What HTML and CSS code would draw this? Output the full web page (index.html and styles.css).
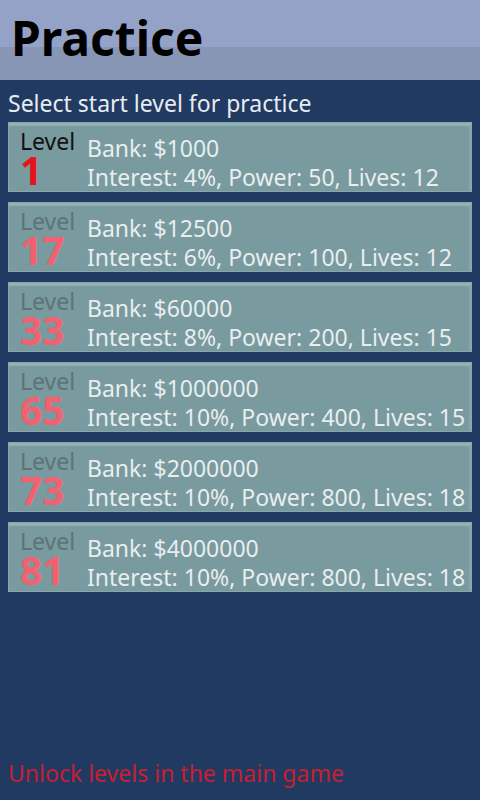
FILE: index.html
```html
<!DOCTYPE html>
<html lang="en">
<head>
    <meta charset="UTF-8">
    <meta name="viewport" content="width=device-width, initial-scale=1.0">
    <title>Practice</title>
    <link rel="stylesheet" href="styles.css">
</head>
<body>

<div class="header">
    <h1>Practice</h1>
</div>

<div class="content">
    <p class="intro">Select start level for practice</p>

    <!-- Level list -->
    <div class="levels">
        <div class="level unlocked">
            <div class="level-num"><span class="label">Level</span><span class="num">1</span></div>
            <div class="level-info"><div>Bank: $1000</div><div>Interest: 4%, Power: 50, Lives: 12</div></div>
        </div>
        <div class="level">
            <div class="level-num"><span class="label">Level</span><span class="num">17</span></div>
            <div class="level-info"><div>Bank: $12500</div><div>Interest: 6%, Power: 100, Lives: 12</div></div>
        </div>
        <div class="level">
            <div class="level-num"><span class="label">Level</span><span class="num">33</span></div>
            <div class="level-info"><div>Bank: $60000</div><div>Interest: 8%, Power: 200, Lives: 15</div></div>
        </div>
        <div class="level">
            <div class="level-num"><span class="label">Level</span><span class="num">65</span></div>
            <div class="level-info"><div>Bank: $1000000</div><div>Interest: 10%, Power: 400, Lives: 15</div></div>
        </div>
        <div class="level">
            <div class="level-num"><span class="label">Level</span><span class="num">73</span></div>
            <div class="level-info"><div>Bank: $2000000</div><div>Interest: 10%, Power: 800, Lives: 18</div></div>
        </div>
        <div class="level">
            <div class="level-num"><span class="label">Level</span><span class="num">81</span></div>
            <div class="level-info"><div>Bank: $4000000</div><div>Interest: 10%, Power: 800, Lives: 18</div></div>
        </div>
    </div>

    <p class="unlock">Unlock levels in the main game</p>
</div>

</body>
</html>
```

FILE: styles.css
```css
html, body {
    height: 100%;
}
body {
    font-family: "Noto Sans", "Open Sans", sans-serif;
    margin: 0;
    background-color: #203a62;
    display: flex;
    flex-direction: column;
}
.header {
    height: 80px;
    background: linear-gradient(to bottom, #93a2c6 0, #93a2c6 47px, #8696b4 47px, #8696b4 100%);
}
.header h1 {
    margin: 0;
    padding-left: 11px;
    font-size: 48px;
    line-height: 75px;
    font-weight: bold;
    color: #000;
}
.content {
    flex: 1;
    display: flex;
    flex-direction: column;
    padding: 0 8px;
}
.intro {
    margin: 0;
    font-size: 23px;
    line-height: 30px;
    padding-top: 8px;
    color: #e8ecf0;
}
.levels {
    display: flex;
    flex-direction: column;
    gap: 10px;
    margin-top: 4px;
}
.level {
    height: 70px;
    box-sizing: border-box;
    width: 464px;
    background-color: #799a9e;
    border: 1px solid #88a8ac;
    box-shadow: inset 0 3px 0 #8fb0b4, inset -2px 0 0 #86a6aa;
    display: flex;
    padding: 7px 0 0 11px;
}
.level-num {
    width: 67px;
    display: flex;
    flex-direction: column;
}
.label {
    font-size: 23px;
    line-height: 22px;
    color: #5b7477;
}
.num {
    font-size: 39px;
    font-weight: bold;
    line-height: 36px;
    color: #f4606e;
}
.unlocked .label {
    color: #111;
}
.unlocked .num {
    color: #e5141e;
}
.level-info {
    margin-top: 4px;
    font-size: 23px;
    line-height: 29px;
    color: #e8eef0;
    white-space: nowrap;
}
.unlock {
    margin: auto 0 0 0;
    padding-bottom: 12px;
    font-size: 23px;
    line-height: 30px;
    color: #c81e32;
}
```
